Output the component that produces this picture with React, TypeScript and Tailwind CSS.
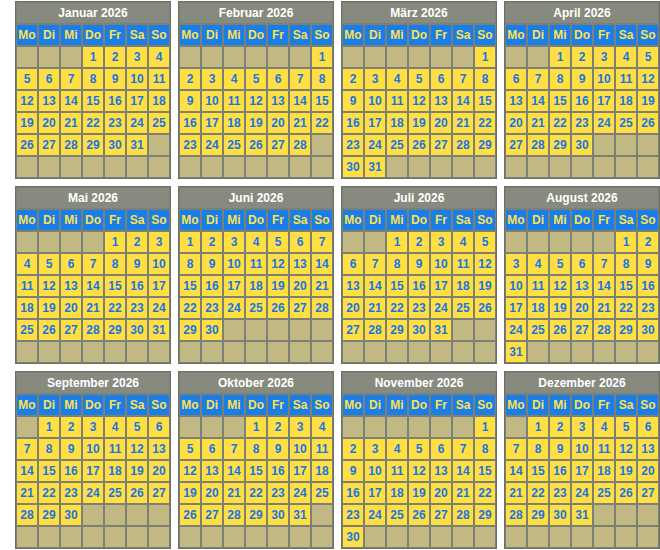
import React from 'react';

const MONTHS = [
  'Januar', 'Februar', 'März', 'April', 'Mai', 'Juni',
  'Juli', 'August', 'September', 'Oktober', 'November', 'Dezember',
];
const WEEKDAYS = ['Mo', 'Di', 'Mi', 'Do', 'Fr', 'Sa', 'So'];
const YEAR = 2026;

function buildCells(month: number): (number | null)[] {
  // Montag als erster Tag der Woche
  const offset = (new Date(YEAR, month, 1).getDay() + 6) % 7;
  const days = new Date(YEAR, month + 1, 0).getDate();
  const cells: (number | null)[] = [];
  for (let i = 0; i < 42; i++) {
    const d = i - offset + 1;
    cells.push(d >= 1 && d <= days ? d : null);
  }
  return cells;
}

function MonthTable({ month }: { month: number }) {
  const cells = buildCells(month);
  return (
    <div className="w-[156px] h-[178px] border border-[#6d7065] bg-[#7d8075] p-[1px]">
      <div className="flex h-[20px] items-center justify-center bg-[#878a7e] text-[12px] font-bold text-white">
        {MONTHS[month]} {YEAR}
      </div>
      <div className="mt-[2px] grid grid-cols-[repeat(7,20px)] gap-[2px]">
        {WEEKDAYS.map((w) => (
          <div
            key={w}
            className="flex h-[20px] items-center justify-center bg-[#1a7ee9] text-[12px] font-bold text-[#ffe14a]"
          >
            {w}
          </div>
        ))}
        {cells.map((d, i) =>
          d ? (
            <div
              key={i}
              className="flex h-[20px] items-center justify-center bg-[#ffdf42] text-[12px] font-bold text-[#1874e6]"
            >
              {d}
            </div>
          ) : (
            <div key={i} className="h-[20px] bg-[#c1b883]" />
          )
        )}
      </div>
    </div>
  );
}

export default function App() {
  return (
    <div
      className="min-h-[550px] bg-white pl-[15px] pt-[1px]"
      style={{ fontFamily: '"Liberation Sans", Arial, sans-serif' }}
    >
      <div className="grid grid-cols-[repeat(4,156px)] gap-[7px] leading-none">
        {MONTHS.map((_, m) => (
          <MonthTable key={m} month={m} />
        ))}
      </div>
    </div>
  );
}
